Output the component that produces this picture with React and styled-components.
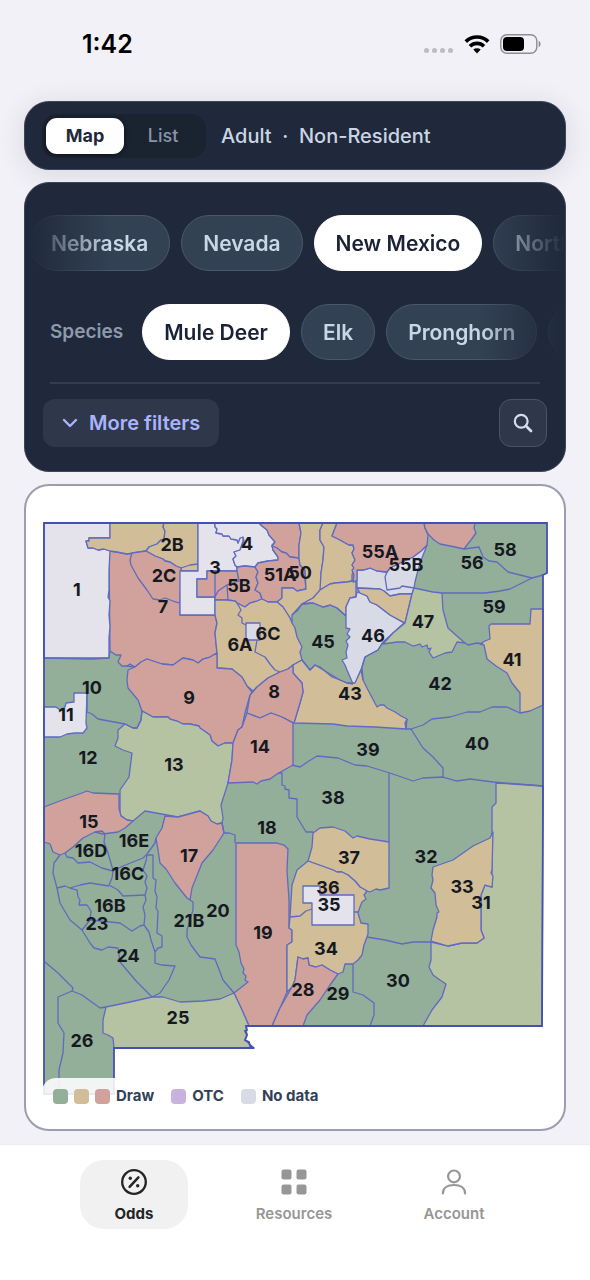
import React, { useState } from 'react';
import styled, { createGlobalStyle } from 'styled-components';

const GlobalStyle = createGlobalStyle`
  * {
    box-sizing: border-box;
  }

  body {
    margin: 0;
    background: #f2f1f7;
    font-family: Inter, "Liberation Sans", sans-serif;
  }

  button {
    font-family: inherit;
    margin: 0;
    cursor: pointer;
  }
`;

const states = ['Nebraska', 'Nevada', 'New Mexico', 'North Dakota'];
const speciesList = ['Mule Deer', 'Elk', 'Pronghorn', 'Bighorn Sheep'];

const colors = {
  green: '#93af99',
  lime: '#b6c3a2',
  tan: '#d1bd98',
  red: '#d1a29b',
  pale: '#e4e3eb',
  none: '#d8dbe5',
  otc: '#c8b3de',
};

const STATE_OUTLINE =
  'M44 523H547L547 573L543 575L543 800L542 1026H246L247 1030L245 1031L247 1035L245 1040L249 1042L250 1046L254 1048H114V1094H44Z';

// hunt units that are not plain green
const units = [
  { fill: 'red', d: 'M109 551L117 552L127 554L133 553L146 551L155 556L163 560L170 562L180 569V615H215L217 623L215 633L217 653L210 657L203 659L198 663L193 660L183 658L173 665L162 664L147 659L141 662L135 667L130 664L127 666L122 666L118 662L121 655L116 655L110 651Z' },
  { fill: 'pale', d: 'M44 523H110V538H89V541H86L88 548L93 548L98 550L104 549L110 551L109 570L109 590L108 597L110 601L109 615L110 627L109 637L109 658H44Z' },
  { fill: 'tan', d: 'M110 523H164L163 527L165 531L164 539L161 540L157 544L149 547L146 551L133 553L127 554L117 552L110 551L104 549L98 550L93 548H88L86 541H89V538H110Z' },
  { fill: 'tan', d: 'M164 523H198V571H181V568L176 566L170 562L165 561L163 559L155 556L146 551L149 547L157 544L161 540L164 539L165 531L163 527Z' },
  { fill: 'red', d: 'M146 551L155 556L163 559L165 561L170 562L176 566L181 568L180 603L173 601L165 598L160 600L153 599L147 590L138 578L131 565L130 560L132 553Z' },
  { fill: 'pale', d: 'M198 523H215L215 527L217 529L216 533L222 534L223 536L229 536L231 539L237 540L238 543L240 538L243 537L243 541L240 550L234 552L236 556L233 559L235 565L237 567V571H207V579H197V597H215V615H180V571H198Z' },
  { fill: 'pale', d: 'M215 523H259L262 526L267 530L269 535L275 542L272 545L273 550L278 557L278 560L268 561L258 563L255 567L245 566L237 567L235 565L233 559L236 556L234 552L240 550L244 541L243 537L240 538L238 543L237 540L231 539L229 536L223 536L222 534L216 533L217 529L215 527Z' },
  { fill: 'red', d: 'M259 523H299L301 533L299 545V558L290 557L286 553L282 552L277 548L272 546L275 542L269 535L267 530L262 526Z' },
  { fill: 'red', d: 'M207 571H237V567L245 566L255 567L258 572L256 577L258 583L255 590L260 593L262 599L257 601L250 603L245 607L237 603L235 601L227 600H215V597H197V579H207Z' },
  { fill: 'red', d: 'M258 563L268 561L278 560V557L273 550L272 546L277 548L282 552L286 553L290 557L299 558L300 565L305 570L305 580L306 589L297 591L293 588H282V598L277 602H268L262 599L260 593L255 590L258 583L256 577L258 572L255 567Z' },
  { fill: 'tan', d: 'M299 523H323L320 530L320 540L324 547L323 560L321 573L321 590L313 598L302 604L298 610L292 615V623L290 618L283 607L277 602L282 598V588H293L297 591L306 589L305 570L300 565L299 558V545L301 533Z' },
  { fill: 'tan', d: 'M323 523H337L332 536L340 540L349 545H353L354 549L352 553L355 560L352 565L354 568L352 575L352 581L347 582L335 583L330 584L320 590L321 573L323 560L324 547L320 540L320 530Z' },
  { fill: 'tan', d: 'M320 590L330 584L335 583L347 582L352 581L356 582V597L350 598L346 607V616L337 608L330 605L323 607L313 603L302 604L313 598Z' },
  { fill: 'tan', d: 'M215 600H227L235 601L237 603L245 607L250 603L257 601L262 599L268 602H277L283 607L290 618L292 623L295 628L297 637L302 647L300 652L302 660L293 665L288 669L280 672L268 678L257 687L253 691L247 686L242 677L232 669L217 668L217 653L215 633L217 623L215 615Z' },
  { fill: 'none', d: 'M246 623H260V640H246Z' },
  { fill: 'none', d: 'M357 570L363 570L370 568L377 571L387 572L390 568L400 563L413 557L421 551L427 545L422 558L418 570L415 582L414 588L412 594L400 594L390 596L384 591L380 589L357 588Z' },
  { fill: 'none', d: 'M357 592L360 593L367 596L370 602L377 605L390 615L404 623L393 633L383 642L378 650L365 657L362 667L355 684H353L347 670L345 665L342 660L347 658L346 652L348 645L346 641L350 637L347 634L350 629L346 628V607L350 598L356 597Z' },
  { fill: 'red', d: 'M337 523H424L425 528L428 535L427 545L421 551L413 557L400 563L390 568L387 572L377 571L370 568L363 570L357 570V580L353 582L354 575L352 570L354 568L352 565L355 560L352 553L354 549L353 545H349L340 540L332 536Z' },
  { fill: 'tan', d: 'M357 588L380 589L384 591L390 596L400 594L412 594L405 623L390 615L377 605L370 602L367 596L360 593Z' },
  { fill: 'red', d: 'M424 523H475L474 528L476 533L471 540L467 545L464 549L455 547L440 544L434 540L428 534L425 528Z' },
  { fill: 'lime', d: 'M414 588L433 592L442 593L443 610L448 628L458 637L465 643L457 642L452 652L445 653L433 658L429 652L431 648L428 649L427 645L422 647L420 644L413 646L405 642L397 642L383 644L393 633L405 623L412 594Z' },
  { fill: 'tan', d: 'M489 626L491 624H530L531 609H543V705L530 711L520 713V693L512 683L507 673L496 666L487 659L484 645L480 644L485 641L490 639Z' },
  { fill: 'tan', d: 'M302 660L310 670L315 665L320 667L325 671L332 677L340 680L347 683H355L361 670L363 680L368 690L377 707L380 705L384 705L387 708L395 712L401 716L407 719L405 723L406 729L375 727L347 726L333 724L294 723L300 703L303 692L302 683L293 673V665Z' },
  { fill: 'red', d: 'M293 665V673L302 683L303 692L300 703L294 723L282 717L271 713L260 718L247 713L250 695L257 687L268 678L280 672L288 669Z' },
  { fill: 'red', d: 'M135 667L141 662L147 659L162 664L173 665L183 658L193 660L198 663L203 659L210 657L217 653V668L232 669L242 677L247 686L252 692L250 695L245 713L242 727L238 730L233 743L225 743L218 746L212 741L210 735L200 728L199 726L190 724L183 724L177 721L170 719L168 717L153 717L142 711L138 700L128 688L127 680L128 670Z' },
  { fill: 'pale', d: 'M44 707H56L60 710L65 707L66 703L74 702V693H87L86 723L87 728L83 733L75 733L67 734L60 737H44Z' },
  { fill: 'lime', d: 'M142 711L153 717L168 717L170 719L177 721L183 724L190 724L199 726L200 728L210 735L212 741L218 746L225 743L233 743L232 760L228 783L221 805L223 818L222 823L217 824L211 821L208 816L200 811L178 817L145 811L133 821L127 820L120 815V790L129 777L132 753L123 750L115 746L118 738L118 730L125 724L133 728H137L141 720Z' },
  { fill: 'red', d: 'M247 713L260 718L271 713L282 717L293 723V765L277 774L270 779L261 781L257 784L253 782L228 783L232 760L233 743L238 730L242 727Z' },
  { fill: 'red', d: 'M44 807L65 799L82 793L87 791L93 793L119 794L119 808L121 816L127 820L133 821L125 828L118 832L103 834L95 832L83 838L73 847L65 853L60 855L53 852L50 844L44 842Z' },
  { fill: 'red', d: 'M165 816L178 817L200 811L208 816L211 821L217 824L222 823L224 833L213 850L202 863L192 888L190 900L187 898L175 883L168 872L166 869L160 863L158 850L156 838L162 828Z' },
  { fill: 'red', d: 'M236 843H277L284 845L288 849L287 870L289 900V928L292 930V942L287 945V992L280 1008L272 1026H249L242 1010L234 993L248 982L245 980L246 976L243 973L244 969L241 963L239 952L236 945Z' },
  { fill: 'tan', d: 'M313 833L320 828L333 827L345 831L353 838L357 836L370 839L383 841L389 842V888L380 890L376 889L370 892L367 891L360 887L355 881L348 875L342 872L337 872L333 870L322 866L308 861L312 847Z' },
  { fill: 'tan', d: 'M308 861L322 866L333 870L337 872L342 872L348 875L355 881L360 887L367 891L364 895L366 899L362 902L360 907L358 913L361 923L368 924V934L367 937L364 945L362 955L358 960L353 964H345L343 972L338 974L330 970L322 965L316 967L309 965L308 958L303 959L298 957L295 980L292 987L287 992V945L292 942V930L289 928L290 917L292 885L297 870Z' },
  { fill: 'pale', d: 'M303 886H320V895H354V925H312V903H303Z' },
  { fill: 'red', d: 'M298 957L303 959L308 958L309 965L316 967L322 965L330 970L338 974L330 985L320 1000L307 1015L303 1026H272L280 1008L292 987L295 980Z' },
  { fill: 'lime', d: 'M496 783L543 786L542 1026H423L432 1010L442 997L446 984L440 980L433 975L429 967L431 960V942L448 946L462 943L477 943L484 938L481 930V895L485 885L492 887V807L496 803Z' },
  { fill: 'tan', d: 'M493 832L492 870L491 873L493 876L492 887L485 885L481 895V930L484 938L477 943L462 943L448 946L431 941L433 930L437 917L437 913L439 912L436 905L435 893L431 888L433 880L432 875L433 867L453 860L473 846L490 838Z' },
  { fill: 'lime', d: 'M106 1007L130 1002L152 997L163 997L180 1002L203 1001L220 999L234 993L242 1010L249 1026L246 1027L247 1035L245 1040L254 1048H114L113 1038L108 1035L103 1033L103 1020Z' },
];

const borders = [
  // north
  'M181 568L190 565L198 564',
  'M215 571V597M215 597L218 591L227 585L228 600M237 571L239 581L227 585',
  'M237 603L241 610L238 615L242 618L242 623L246 625M257 640L255 652L265 657L270 664L275 670L280 672',
  'M387 572L385 577L387 590L400 588L402 586L414 588',
  'M464 549L479 547L483 557L489 561L497 562L508 572L532 578L543 575',
  'M532 578L520 584L510 589L500 591L485 593L442 593',
  'M292 615L302 604L313 603L323 607L330 605L337 608L346 616',
  'M353 684L347 683L340 680L325 671L315 665L310 670L302 660',
  'M465 643L468 645L477 643L483 644',
  'M383 642L378 650L365 657L362 667L363 680',
  // centre
  'M44 658L92 659L109 658L110 651M127 666L135 667',
  'M87 693V712L92 714L98 719L125 724L133 728L137 728L141 720L142 710',
  'M407 719L406 729L411 729L423 725L432 719L450 717L467 712L480 712L492 707L507 707L520 713',
  'M411 729L423 748L433 757L443 768V777',
  'M292 765L300 767L309 761L317 756L338 758L355 765L367 766L390 773L413 781L423 778L443 777L457 781L470 779L493 782L543 786',
  'M278 773L282 773V785L285 786V789L289 790V798L297 799V817L306 832H313',
  'M389 773V842',
  'M222 823L224 833L229 833L235 835V843',
  // south west
  'M95 832L102 831L105 834L104 842L108 853L113 870',
  'M65 853L67 857L73 858L78 863L90 862L102 868L113 871L123 866L143 858L147 854L155 843L156 838',
  'M113 871L112 878L109 885L118 890L123 896L145 895',
  'M57 888L65 886L70 888L80 885L90 883L109 886',
  'M70 888L77 890L78 897L80 900L79 905L87 905L91 911L90 920L82 930',
  'M90 920L110 922L120 923L132 931L140 926L144 925',
  'M147 855L146 861L143 870L147 876L145 882L147 888L145 895L146 900L143 907L145 915L144 925L149 932L151 940L155 952V963L162 965L175 966L169 980L160 993L152 997',
  'M147 855H153V878L156 880L155 891L157 897L156 908L158 911L157 933L162 936V947L158 948L155 952',
  'M60 855L54 863L53 873L57 888L60 903L70 920L82 930L90 943L94 948L102 950L108 947L118 948L120 962L137 982L152 997',
  'M190 900L193 902L193 910L187 930L187 937L191 945L200 957L215 959L223 980L234 993',
  'M45 962L58 973L73 988L72 991L58 997V1023L64 1033L63 1053L59 1070V1094',
  'M72 991L82 995L100 1008L106 1007',
  // south east
  'M290 917L300 916L306 911L312 909M354 912H358',
  'M353 964V992L363 995L374 1003V1015L370 1026',
  'M367 937L385 940L402 944L413 942L431 942',
];

const labels = [
  ['1', 77, 590], ['2B', 172, 545], ['2C', 164, 576], ['7', 163, 607], ['3', 215, 568],
  ['4', 247, 544], ['5B', 239, 586], ['51A', 280, 575], ['50', 300, 573], ['6A', 240, 645],
  ['6C', 268, 634], ['45', 323, 642], ['46', 373, 636], ['55A', 380, 552], ['55B', 406, 565],
  ['56', 472, 563], ['58', 505, 550], ['59', 494, 607], ['47', 423, 622], ['41', 512, 660],
  ['42', 440, 684], ['43', 350, 694], ['8', 274, 692], ['9', 189, 698], ['10', 92, 688],
  ['11', 66, 715], ['12', 88, 758], ['13', 174, 765], ['14', 260, 747], ['39', 368, 750],
  ['40', 477, 744], ['38', 333, 798], ['15', 89, 822], ['16E', 134, 841], ['16D', 91, 851],
  ['16C', 128, 874], ['17', 189, 856], ['18', 267, 828], ['37', 349, 858], ['32', 426, 857],
  ['36', 328, 888], ['35', 329, 905], ['33', 462, 887], ['31', 481, 903], ['16B', 110, 906],
  ['23', 97, 924], ['24', 128, 956], ['21B', 189, 921], ['20', 218, 911], ['19', 263, 933],
  ['34', 326, 949], ['28', 303, 990], ['29', 338, 994], ['30', 398, 981], ['25', 178, 1018],
  ['26', 82, 1041],
];

const Screen = styled.div`
  min-height: 100vh;
  display: flex;
  flex-direction: column;
`;

const StatusBar = styled.header`
  display: flex;
  justify-content: space-between;
  align-items: center;
  height: 89px;
  padding: 0 48px 2px 82px;
`;

const Clock = styled.time`
  font-size: 25px;
  font-weight: 600;
  line-height: 32px;
  color: #000;
`;

const StatusIcons = styled.div`
  display: flex;
  align-items: center;
  gap: 10px;

  svg {
    display: block;
  }
`;

const Content = styled.main`
  flex: 1;
  display: flex;
  flex-direction: column;
  gap: 12px;
  padding: 12px 24px;
`;

const Panel = styled.section`
  background: #1f293b;
  border: 1px solid #3c475a;
  border-radius: 25px;
  overflow: hidden;
`;

const ModeBar = styled(Panel)`
  display: flex;
  align-items: center;
  gap: 15px;
  height: 69px;
  padding: 0 17px;
  box-shadow: 0 4px 28px rgba(40, 30, 40, 0.12);
`;

const Segmented = styled.div`
  display: flex;
  padding: 4px;
  border-radius: 15px;
  background: #1a2330;
`;

const Segment = styled.button`
  width: 78px;
  height: 36px;
  border: 0;
  border-radius: 11px;
  font-size: 18px;
  font-weight: ${props => (props.$active ? 700 : 500)};
  color: ${props => (props.$active ? '#1f293b' : '#8995a8')};
  background: ${props => (props.$active ? '#fff' : 'transparent')};
  box-shadow: ${props => (props.$active ? '0 1px 5px rgba(0, 0, 0, 0.5)' : 'none')};
`;

const Profile = styled.p`
  margin: 0;
  font-size: 20px;
  font-weight: 500;
  line-height: 24px;
  color: #ccd5e3;
  white-space: pre;
`;

const Filters = styled(Panel)`
  padding: 32px 0 24px;
`;

const ChipRow = styled.div`
  display: flex;
  gap: 11px;
  overflow: hidden;
`;

const StateRow = styled(ChipRow)`
  padding-left: 4px;
  mask-image: linear-gradient(to right, transparent, #000 84px, #000 calc(100% - 84px), transparent);
`;

const SpeciesRow = styled.div`
  display: flex;
  align-items: center;
  gap: 19px;
  margin-top: 33px;
  padding-left: 25px;
`;

const SpeciesLabel = styled.span`
  flex: none;
  font-size: 19px;
  font-weight: 600;
  line-height: 24px;
  color: #8e99ab;
`;

const SpeciesChips = styled(ChipRow)`
  flex: 1;
  min-width: 0;
  mask-image: linear-gradient(to right, #000 calc(100% - 84px), transparent);
`;

const Chip = styled.button`
  flex: none;
  height: 56px;
  padding: 0 21px;
  border: 1px solid ${props => (props.$active ? '#fff' : '#4a586b')};
  border-radius: 28px;
  font-size: 21px;
  font-weight: 600;
  white-space: nowrap;
  color: ${props => (props.$active ? '#1a2235' : '#c9d6e6')};
  background: ${props => (props.$active ? '#fff' : '#334155')};
`;

const Divider = styled.hr`
  height: 2px;
  margin: 22px 25px 15px;
  border: 0;
  background: #323d4f;
`;

const Actions = styled.div`
  display: flex;
  justify-content: space-between;
  padding: 0 18px;
`;

const MoreButton = styled.button`
  display: flex;
  align-items: center;
  gap: 11px;
  height: 48px;
  padding: 0 19px;
  border: 0;
  border-radius: 12px;
  font-size: 20px;
  font-weight: 600;
  color: #a9b4fc;
  background: #2f384a;
`;

const SearchButton = styled.button`
  display: flex;
  align-items: center;
  justify-content: center;
  width: 48px;
  height: 48px;
  padding: 0;
  border: 1px solid #4a5465;
  border-radius: 12px;
  color: #d3deeb;
  background: #2f384a;
`;

const MapCard = styled.section`
  position: relative;
  padding: 32px 14px 34px;
  border: 2px solid #9b9eae;
  border-radius: 25px;
  background: #fff;
`;

const MapSvg = styled.svg`
  display: block;
  width: 100%;
  height: auto;

  text {
    font-family: Inter, "Liberation Sans", sans-serif;
    font-size: 18px;
    font-weight: 700;
    text-anchor: middle;
    fill: #16191f;
  }
`;

const Legend = styled.ul`
  position: absolute;
  left: 16px;
  bottom: 15px;
  display: flex;
  align-items: center;
  gap: 17px;
  margin: 0;
  padding: 8px 11px;
  list-style: none;
  border-radius: 14px;
  background: rgba(255, 255, 255, 0.88);
`;

const LegendItem = styled.li`
  display: flex;
  align-items: center;
  gap: 6px;
  font-size: 15px;
  font-weight: 700;
  line-height: 20px;
  color: #334155;
`;

const Swatch = styled.span`
  width: 15px;
  height: 15px;
  border-radius: 4px;
  background: ${props => props.$color};
`;

const TabBar = styled.nav`
  display: grid;
  grid-template-columns: repeat(3, 1fr);
  justify-items: center;
  height: 136px;
  padding: 15px 56px 0 54px;
  border-top: 1px solid #ebebf0;
  background: #fff;
`;

const Tab = styled.button`
  display: flex;
  flex-direction: column;
  align-items: center;
  gap: 8px;
  width: 108px;
  height: 69px;
  padding: 8px 0 0;
  border: 0;
  border-radius: 24px;
  font-size: 15px;
  font-weight: ${props => (props.$active ? 700 : 600)};
  line-height: 20px;
  color: ${props => (props.$active ? '#242424' : '#969696')};
  background: ${props => (props.$active ? '#f1f1f1' : 'transparent')};
`;

const SignalIcon = () => (
  <svg width="30" height="20" viewBox="0 0 30 20" fill="#bdbcc2">
    <circle cx="2.5" cy="16.5" r="2.5" />
    <circle cx="10.5" cy="16.5" r="2.5" />
    <circle cx="18.5" cy="16.5" r="2.5" />
    <circle cx="26.5" cy="16.5" r="2.5" />
  </svg>
);

const WifiIcon = () => (
  <svg width="26" height="20" viewBox="0 0 26 20" fill="none" stroke="#000" strokeWidth="3.6">
    <path d="M1.8 7.6a16 16 0 0 1 22.4 0" />
    <path d="M6 12.2a10 10 0 0 1 14 0" />
    <path d="M13 19.4L9.3 15.6a5.4 5.4 0 0 1 7.4 0Z" fill="#000" stroke="none" />
  </svg>
);

const BatteryIcon = () => (
  <svg width="42" height="20" viewBox="0 0 42 20">
    <rect x="0.8" y="0.8" width="36" height="18.4" rx="6" fill="none" stroke="#8d8d92" strokeWidth="1.4" />
    <rect x="3" y="3" width="21" height="14" rx="4" fill="#000" />
    <path d="M38.6 6.8c2.6 1 2.6 5.4 0 6.4Z" fill="#8d8d92" />
  </svg>
);

const OddsIcon = () => (
  <svg width="28" height="28" viewBox="0 0 28 28" fill="none" stroke="currentColor" strokeWidth="2.3" strokeLinecap="round">
    <circle cx="14" cy="14" r="11.8" />
    <path d="M18.4 9.4L9.6 18.8" strokeWidth="2.5" />
    <circle cx="10.3" cy="10.3" r="1.7" fill="currentColor" stroke="none" />
    <circle cx="17.7" cy="17.7" r="1.7" fill="currentColor" stroke="none" />
  </svg>
);

const ResourcesIcon = () => (
  <svg width="28" height="28" viewBox="0 0 28 28" fill="currentColor">
    <rect x="1.5" y="1.5" width="10" height="10" rx="2.2" />
    <rect x="16.5" y="1.5" width="10" height="10" rx="2.2" />
    <rect x="1.5" y="16.5" width="10" height="10" rx="2.2" />
    <rect x="16.5" y="16.5" width="10" height="10" rx="2.2" />
  </svg>
);

const AccountIcon = () => (
  <svg width="28" height="28" viewBox="0 0 28 28" fill="none" stroke="currentColor" strokeWidth="2.2" strokeLinecap="round">
    <circle cx="14" cy="8.4" r="5.9" />
    <path d="M2.9 25.4c0-5.4 4.6-8.4 11.1-8.4s11.1 3 11.1 8.4" />
  </svg>
);

const tabs = [
  { name: 'Odds', Icon: OddsIcon },
  { name: 'Resources', Icon: ResourcesIcon },
  { name: 'Account', Icon: AccountIcon },
];

const UnitMap = () => (
  <MapSvg viewBox="40 518 510 577" role="img" aria-label="New Mexico hunt units">
    <path d={STATE_OUTLINE} fill={colors.green} />
    <g stroke="#5f6bc0" strokeWidth="1.3" strokeLinejoin="round">
      {units.map((unit, index) => (
        <path key={index} d={unit.d} fill={colors[unit.fill]} />
      ))}
      {borders.map((d, index) => (
        <path key={index} d={d} fill="none" />
      ))}
    </g>
    <path d={STATE_OUTLINE} fill="none" stroke="#4450b4" strokeWidth="1.8" />
    {labels.map(([name, x, y]) => (
      <text key={name} x={x} y={y + 6}>{name}</text>
    ))}
  </MapSvg>
);

const App = () => {
  const [mode, setMode] = useState('Map');
  const [state, setState] = useState('New Mexico');
  const [species, setSpecies] = useState('Mule Deer');
  const [tab, setTab] = useState('Odds');

  return (
    <Screen>
      <GlobalStyle />
      <StatusBar>
        <Clock>1:42</Clock>
        <StatusIcons>
          <SignalIcon />
          <WifiIcon />
          <BatteryIcon />
        </StatusIcons>
      </StatusBar>

      <Content>
        <ModeBar>
          <Segmented>
            {['Map', 'List'].map((name) => (
              <Segment key={name} $active={mode === name} onClick={() => setMode(name)}>
                {name}
              </Segment>
            ))}
          </Segmented>
          <Profile>{'Adult  ·  Non-Resident'}</Profile>
        </ModeBar>

        <Filters>
          <StateRow>
            {states.map((name) => (
              <Chip key={name} $active={state === name} onClick={() => setState(name)}>
                {name}
              </Chip>
            ))}
          </StateRow>
          <SpeciesRow>
            <SpeciesLabel>Species</SpeciesLabel>
            <SpeciesChips>
              {speciesList.map((name) => (
                <Chip key={name} $active={species === name} onClick={() => setSpecies(name)}>
                  {name}
                </Chip>
              ))}
            </SpeciesChips>
          </SpeciesRow>
          <Divider />
          <Actions>
            <MoreButton>
              <svg width="16" height="16" viewBox="0 0 16 16" fill="none" stroke="currentColor" strokeWidth="2.4" strokeLinecap="round" strokeLinejoin="round">
                <path d="M2 5L8 11L14 5" />
              </svg>
              More filters
            </MoreButton>
            <SearchButton aria-label="Search">
              <svg width="20" height="20" viewBox="0 0 20 20" fill="none" stroke="currentColor" strokeWidth="2.2" strokeLinecap="round">
                <circle cx="8.2" cy="8.2" r="6.4" />
                <path d="M13 13L18 18" strokeWidth="2.8" />
              </svg>
            </SearchButton>
          </Actions>
        </Filters>

        <MapCard>
          <UnitMap />
          <Legend>
            <LegendItem>
              <Swatch $color={colors.green} />
              <Swatch $color={colors.tan} />
              <Swatch $color={colors.red} />
              Draw
            </LegendItem>
            <LegendItem>
              <Swatch $color={colors.otc} />
              OTC
            </LegendItem>
            <LegendItem>
              <Swatch $color={colors.none} />
              No data
            </LegendItem>
          </Legend>
        </MapCard>
      </Content>

      <TabBar>
        {tabs.map(({ name, Icon }) => (
          <Tab key={name} $active={tab === name} onClick={() => setTab(name)}>
            <Icon />
            {name}
          </Tab>
        ))}
      </TabBar>
    </Screen>
  );
};

export default App;
